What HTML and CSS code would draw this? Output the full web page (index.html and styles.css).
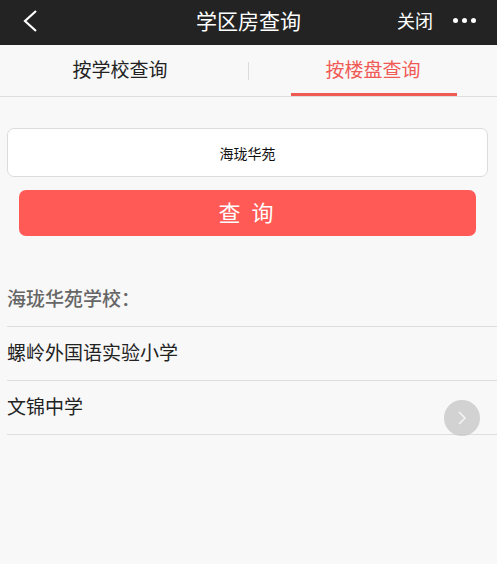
FILE: index.html
```html
<!DOCTYPE html>
<html>
<head>
<meta name="viewport" content="width=device-width, initial-scale=1">
<link rel="stylesheet" href="styles.css">
</head>
<body>

<div class="topbar">
  <svg class="back" width="16" height="24" viewBox="0 0 16 24">
    <path d="M14 2 L3 12 L14 22" fill="none" stroke="#fff" stroke-width="2.2"/>
  </svg>
  <div class="title">学区房查询</div>
  <div class="actions">
    <span class="close">关闭</span>
    <span class="dots"><i></i><i></i><i></i></span>
  </div>
</div>

<div class="tabs">
  <div class="tab first">按学校查询</div>
  <div class="sep"></div>
  <div class="tab active">按楼盘查询</div>
</div>

<div class="container">
  <input type="text" class="search" value="海珑华苑">
  <button type="button" class="querybtn">查 询</button>

  <div class="result-title">海珑华苑学校：</div>
  <ul class="list">
    <li>螺岭外国语实验小学</li>
    <li>文锦中学</li>
  </ul>
</div>

<!-- floating next button -->
<div class="float-btn">
  <svg width="12" height="16" viewBox="0 0 12 16">
    <path d="M3 2 L9 8 L3 14" fill="none" stroke="#f4f4f4" stroke-width="1.6"/>
  </svg>
</div>

</body>
</html>
```

FILE: styles.css
```css
* {
  box-sizing: border-box;
}

body {
  margin: 0;
  background: #f8f8f8;
  font-family: "Noto Sans CJK SC", "Noto Sans", sans-serif;
  color: #222;
}

/* Top dark bar */
.topbar {
  height: 45px;
  background: #232323;
  display: flex;
  align-items: center;
  position: relative;
  color: #fff;
}

.back {
  margin-left: 22px;
  margin-bottom: 4px;
}

.title {
  position: absolute;
  left: 0;
  right: 0;
  top: 0;
  text-align: center;
  font-size: 21px;
  line-height: 40px;
  pointer-events: none;
}

.actions {
  margin-left: auto;
  display: flex;
  align-items: center;
  padding-right: 21px;
  padding-bottom: 5px;
}

.close {
  font-size: 18px;
  line-height: 40px;
}

.dots {
  display: flex;
  gap: 4px;
  margin-left: 20px;
}

.dots i {
  width: 5px;
  height: 5px;
  border-radius: 50%;
  background: #fff;
}

/* Tabs */
.tabs {
  height: 52px;
  display: flex;
  align-items: center;
  border-bottom: 1px solid #dedede;
  background: #f8f8f8;
}

.tab {
  flex: 1;
  height: 51px;
  line-height: 48px;
  text-align: center;
  font-size: 19px;
  color: #222;
}

.tab.first {
  text-indent: -8px;
}

.tab.active {
  color: #f05a55;
  position: relative;
}

.tab.active:after {
  content: "";
  position: absolute;
  left: 42px;
  right: 40px;
  bottom: 0;
  height: 3px;
  background: #f05a55;
}

.sep {
  width: 1px;
  height: 18px;
  background: #dcdcdc;
}

/* Content */
.container {
  padding: 31px 0 0 7px;
}

.search {
  display: block;
  width: 481px;
  height: 49px;
  border: 1px solid #dcdcdc;
  border-radius: 7px;
  background: #fff;
  text-align: center;
  font-family: inherit;
  font-size: 14px;
  color: #111;
  outline: none;
}

.querybtn {
  display: block;
  width: 457px;
  height: 46px;
  margin: 13px 0 0 12px;
  padding: 0 0 5px 0;
  border: none;
  border-radius: 7px;
  background: #ff5a55;
  color: #fff;
  font-family: inherit;
  font-size: 22px;
  letter-spacing: 3px;
}

.result-title {
  margin-top: 44px;
  height: 47px;
  line-height: 36px;
  font-size: 19px;
  color: #666;
  font-weight: 500;
  border-bottom: 1px solid #dedede;
}

.list {
  list-style: none;
  margin: 0;
  padding: 0;
}

.list li {
  height: 54px;
  line-height: 50px;
  font-size: 19px;
  border-bottom: 1px solid #dedede;
}

.float-btn {
  position: absolute;
  left: 444px;
  top: 400px;
  width: 36px;
  height: 36px;
  border-radius: 50%;
  background: rgba(200, 200, 200, 0.8);
  display: flex;
  align-items: center;
  justify-content: center;
}
```
